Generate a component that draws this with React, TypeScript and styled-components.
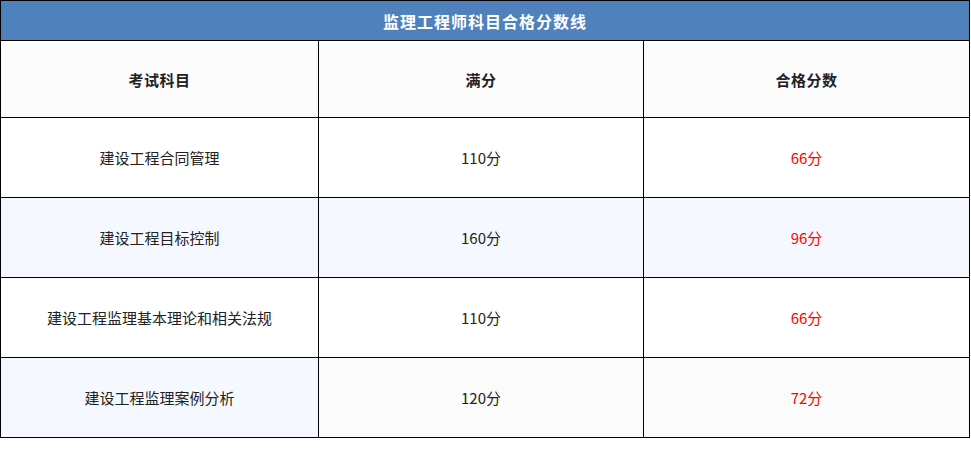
import React from 'react';
import styled, { createGlobalStyle } from 'styled-components';

const GlobalStyle = createGlobalStyle`
  html, body {
    margin: 0;
    padding: 0;
    background: #ffffff;
    font-family: "Noto Sans CJK SC", "Liberation Sans", sans-serif;
  }
`

const Table = styled.table`
  width: 969px;
  border-collapse: collapse;
  table-layout: fixed;
  font-size: 15px;
  color: #222222;
`

const TitleCell = styled.th`
  height: 39px;
  padding: 0;
  border: 1px solid #000000;
  background: #4f81bd;
  color: #ffffff;
  font-size: 16px;
  letter-spacing: 1px;
  font-weight: bold;
  text-align: center;
`

const HeadCell = styled.th`
  height: 76px;
  padding: 0;
  border: 1px solid #000000;
  background: #fcfcfc;
  font-size: 15px;
  letter-spacing: 0.5px;
  font-weight: bold;
  text-align: center;
`

const Row = styled.tr<{ $bg: string }>`
  background: ${(p) => p.$bg};
`

const Cell = styled.td<{ $red?: boolean; $bg?: string }>`
  height: 79px;
  padding: 0;
  border: 1px solid #000000;
  text-align: center;
  background: ${(p) => p.$bg || 'transparent'};
  color: ${(p) => (p.$red ? '#ff0000' : '#222222')};
`

const rows = [
  { subject: '建设工程合同管理', full: '110分', pass: '66分', bg: '#ffffff' },
  { subject: '建设工程目标控制', full: '160分', pass: '96分', bg: '#f5f9ff' },
  { subject: '建设工程监理基本理论和相关法规', full: '110分', pass: '66分', bg: '#ffffff' },
  { subject: '建设工程监理案例分析', full: '120分', pass: '72分', bg: '#fbfbfb', firstBg: '#f5f9ff' },
]

function App() {
  return (
    <>
      <GlobalStyle />
      <Table>
        <colgroup>
          <col style={{ width: 318 }} />
          <col style={{ width: 325 }} />
          <col style={{ width: 326 }} />
        </colgroup>
        <thead>
          <tr>
            <TitleCell colSpan={3}>监理工程师科目合格分数线</TitleCell>
          </tr>
          <tr>
            <HeadCell>考试科目</HeadCell>
            <HeadCell>满分</HeadCell>
            <HeadCell>合格分数</HeadCell>
          </tr>
        </thead>
        <tbody>
          {rows.map((r) => (
            <Row key={r.subject} $bg={r.bg}>
              <Cell $bg={r.firstBg}>{r.subject}</Cell>
              <Cell>{r.full}</Cell>
              <Cell $red>{r.pass}</Cell>
            </Row>
          ))}
        </tbody>
      </Table>
    </>
  );
}

export default App;
